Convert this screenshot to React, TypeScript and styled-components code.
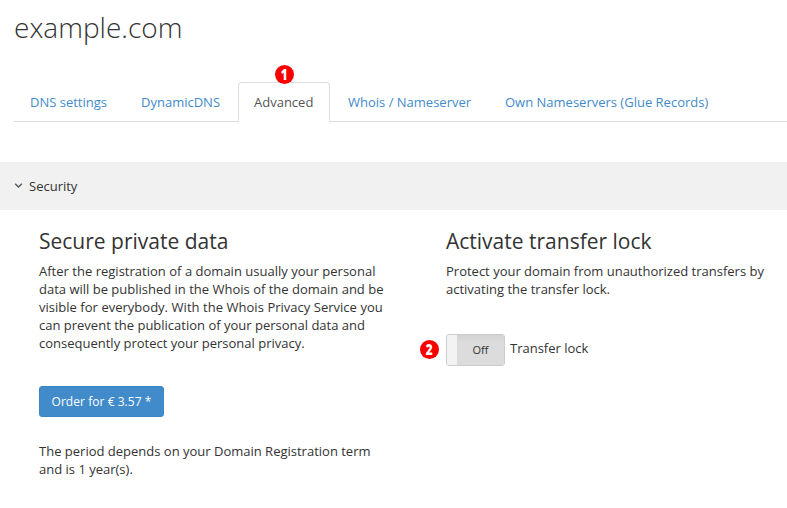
import React from "react";
import styled, { createGlobalStyle } from "styled-components";

const GlobalStyle = createGlobalStyle`
  * { box-sizing: border-box; }
  body {
    margin: 0;
    background: #fff;
    color: #333;
    font: 13px/18px "Open Sans", sans-serif;
    overflow: hidden;
  }
`;

const Page = styled.main`
  width: 787px;
  height: 508px;
  overflow: hidden;
`;

const Title = styled.h1`
  margin: 0;
  padding: 7px 0 0 14px;
  height: 82px;
  font-size: 28px;
  line-height: 40px;
  font-weight: 300;
`;

const Tabs = styled.nav`
  display: flex;
  gap: 2px;
  height: 40px;
  margin-left: 14px;
  border-bottom: 1px solid #ddd;
`;

const Tab = styled.a<{ $width: number; $active?: boolean }>`
  position: relative;
  flex: none;
  width: ${(p) => p.$width}px;
  height: 40px;
  padding: 10px 0 0 15px;
  border: 1px solid ${(p) => (p.$active ? "#ddd" : "transparent")};
  border-bottom-color: ${(p) => (p.$active ? "#fff" : "transparent")};
  border-radius: 4px 4px 0 0;
  background: ${(p) => (p.$active ? "#fff" : "transparent")};
  color: ${(p) => (p.$active ? "#555" : "#428bca")};
  white-space: nowrap;
`;

const Badge = styled.span`
  display: block;
  width: 19px;
  height: 19px;
  svg { display: block; overflow: visible; }
`;

const TabBadge = styled(Badge)`
  position: absolute;
  top: -18px;
  left: 36px;
`;

const SectionHeader = styled.header`
  display: flex;
  align-items: center;
  gap: 6px;
  height: 48px;
  margin-top: 40px;
  padding: 0 0 1px 14px;
  background: #f1f1f1;
`;

const Columns = styled.div`
  display: grid;
  grid-template-columns: 407px 1fr;
  padding: 18px 0 0 39px;
`;

const Heading = styled.h2`
  margin: 0 0 8px;
  font-size: 21px;
  line-height: 26px;
  font-weight: 400;
  color: #333;
`;

const Text = styled.p`
  margin: 0;
  white-space: nowrap;
`;

const Line = styled.span<{ $gap: number }>`
  display: block;
  word-spacing: ${(p) => p.$gap}px;
`;

const OrderButton = styled.button`
  display: block;
  width: 125px;
  height: 31px;
  margin: 34px 0 25px;
  padding: 0;
  border: 1px solid #3d86c6;
  border-radius: 3px;
  background: #428bca;
  color: #fff;
  font: 500 12px/18px "Open Sans", sans-serif;
  letter-spacing: 0.05px;
`;

const ToggleRow = styled.div`
  display: flex;
  align-items: center;
  margin: 36px 0 0 -26px;
`;

const ToggleBadge = styled(Badge)`
  margin-bottom: 1px;
`;

const Toggle = styled.div`
  display: flex;
  width: 59px;
  height: 32px;
  margin: 0 5px 0 7px;
  border: 1px solid #ccc;
  border-radius: 3px;
  overflow: hidden;
`;

const Handle = styled.span`
  width: 10px;
  background: #f3f3f3;
`;

const ToggleState = styled.span`
  flex: 1;
  padding-top: 6px;
  background: linear-gradient(#d2d2d2, #dcdcdc 8px);
  font-size: 11px;
  text-align: center;
`;

const ToggleLabel = styled.span`
  padding-bottom: 4px;
`;

const NumberBadge = ({ n }: { n: number }) => (
  <svg width="19" height="19" viewBox="0 0 19 19">
    <circle cx="9.5" cy="9.5" r="9.5" fill="#f80000" />
    <text
      transform="translate(9.2 15) scale(0.76 1)"
      textAnchor="middle"
      fontFamily="Open Sans, sans-serif"
      fontWeight="800"
      fontSize="15.5"
      fill="#fff"
    >
      {n}
    </text>
  </svg>
);

type TextLine = { text: string; gap?: number };

const Paragraph = ({ lines }: { lines: TextLine[] }) => (
  <Text>
    {lines.map(({ text, gap = 0 }) => (
      <Line key={text} $gap={gap}>
        {text}
      </Line>
    ))}
  </Text>
);

export default function App() {
  return (
    <>
      <GlobalStyle />
      <Page>
        <Title>example.com</Title>
        <Tabs>
          <Tab $width={109}>DNS settings</Tab>
          <Tab $width={111}>DynamicDNS</Tab>
          <Tab $width={92} $active>
            Advanced
            <TabBadge>
              <NumberBadge n={1} />
            </TabBadge>
          </Tab>
          <Tab $width={155}>Whois / Nameserver</Tab>
          <Tab $width={236}>Own Nameservers (Glue Records)</Tab>
        </Tabs>
        <SectionHeader>
          <svg width="9" height="8" viewBox="0 0 9 8" fill="none" stroke="#555" strokeWidth="1.3">
            <path d="M1.2 1.8 L4.5 5 L7.8 1.8" />
          </svg>
          <span>Security</span>
        </SectionHeader>
        <Columns>
          <section>
            <Heading>Secure private data</Heading>
            <Paragraph
              lines={[
                { text: "After the registration of a domain usually your personal", gap: 0.1 },
                { text: "data will be published in the Whois of the domain and be" },
                { text: "visible for everybody. With the Whois Privacy Service you", gap: 0.2 },
                { text: "can prevent the publication of your personal data and" },
                { text: "consequently protect your personal privacy." },
              ]}
            />
            <OrderButton>Order for € 3.57 *</OrderButton>
            <Paragraph
              lines={[
                { text: "The period depends on your Domain Registration term" },
                { text: "and is 1 year(s)." },
              ]}
            />
          </section>
          <section>
            <Heading>Activate transfer lock</Heading>
            <Paragraph
              lines={[
                { text: "Protect your domain from unauthorized transfers by" },
                { text: "activating the transfer lock." },
              ]}
            />
            <ToggleRow>
              <ToggleBadge>
                <NumberBadge n={2} />
              </ToggleBadge>
              <Toggle>
                <Handle />
                <ToggleState>Off</ToggleState>
              </Toggle>
              <ToggleLabel>Transfer lock</ToggleLabel>
            </ToggleRow>
          </section>
        </Columns>
      </Page>
    </>
  );
}
